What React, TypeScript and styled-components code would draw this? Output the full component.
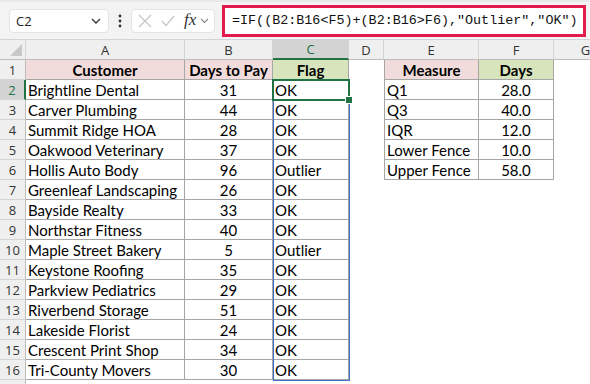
import React from "react";
import styled, { createGlobalStyle } from "styled-components";

const GlobalStyle = createGlobalStyle`
    body {
        margin: 0;
        background: #ffffff;
    }
`;

const customers: [string, number, string][] = [
    ["Brightline Dental", 31, "OK"],
    ["Carver Plumbing", 44, "OK"],
    ["Summit Ridge HOA", 28, "OK"],
    ["Oakwood Veterinary", 37, "OK"],
    ["Hollis Auto Body", 96, "Outlier"],
    ["Greenleaf Landscaping", 26, "OK"],
    ["Bayside Realty", 33, "OK"],
    ["Northstar Fitness", 40, "OK"],
    ["Maple Street Bakery", 5, "Outlier"],
    ["Keystone Roofing", 35, "OK"],
    ["Parkview Pediatrics", 29, "OK"],
    ["Riverbend Storage", 51, "OK"],
    ["Lakeside Florist", 24, "OK"],
    ["Crescent Print Shop", 34, "OK"],
    ["Tri-County Movers", 30, "OK"],
];

const measures: [string, string][] = [
    ["Q1", "28.0"],
    ["Q3", "40.0"],
    ["IQR", "12.0"],
    ["Lower Fence", "10.0"],
    ["Upper Fence", "58.0"],
];

const columns = ["A", "B", "C", "D", "E", "F", "G"];
const PINK = "#f2dcdb";
const GREEN = "#d8e4bc";

const App = () => {
    const rows = [];
    for (let r = 1; r <= 17; r++) {
        const data = r >= 2 && r <= 16 ? customers[r - 2] : null;
        const m = r >= 2 && r <= 6 ? measures[r - 2] : null;
        const inLeft = r <= 16;
        const inRight = r <= 6;
        rows.push(
            <React.Fragment key={r}>
                {/* row 17 is only a sliver at the bottom edge */}
                <RowHead $active={r === 2}>{r <= 16 ? r : ""}</RowHead>
                {r === 1 ? (
                    <>
                        <Cell $boxed $fill={PINK} $bold $align="center">Customer</Cell>
                        <Cell $boxed $fill={PINK} $bold $align="center">Days to Pay</Cell>
                        <Cell $boxed $fill={GREEN} $bold $align="center">Flag</Cell>
                        <Cell />
                        <Cell $boxed $left $fill={PINK} $bold $align="center">Measure</Cell>
                        <Cell $boxed $fill={GREEN} $bold $align="center">Days</Cell>
                        <Cell />
                    </>
                ) : (
                    <>
                        <Cell $boxed={inLeft}>{data ? data[0] : ""}</Cell>
                        <Cell $boxed={inLeft} $align="center">{data ? data[1] : ""}</Cell>
                        <Cell $boxed={inLeft}>{data ? data[2] : ""}</Cell>
                        <Cell />
                        <Cell $boxed={inRight} $left={inRight}>{m ? m[0] : ""}</Cell>
                        <Cell $boxed={inRight} $align="center">{m ? m[1] : ""}</Cell>
                        <Cell />
                    </>
                )}
            </React.Fragment>
        );
    }

    return (
        <Page>
            <GlobalStyle />
            <FormulaBar>
                <NameBox>
                    <span>C2</span>
                    <svg width="10" height="6" viewBox="0 0 10 6">
                        <polyline points="1,1 5,5 9,1" fill="none" stroke="#333" strokeWidth="1.3" />
                    </svg>
                </NameBox>
                <Dots>
                    <svg width="4" height="14" viewBox="0 0 4 14">
                        <circle cx="2" cy="2" r="1.4" fill="#333" />
                        <circle cx="2" cy="7" r="1.4" fill="#333" />
                        <circle cx="2" cy="12" r="1.4" fill="#333" />
                    </svg>
                </Dots>
                <ActionBox>
                    <svg width="14" height="14" viewBox="0 0 14 14">
                        <path d="M1 1 L13 13 M13 1 L1 13" stroke="#c6c6c6" strokeWidth="1.2" />
                    </svg>
                    <svg width="14" height="12" viewBox="0 0 14 12">
                        <polyline points="1,6 5,10.5 13,1" fill="none" stroke="#c6c6c6" strokeWidth="1.2" />
                    </svg>
                    <Fx>fx</Fx>
                    <svg width="9" height="6" viewBox="0 0 9 6">
                        <polyline points="1,1 4.5,4.5 8,1" fill="none" stroke="#888" strokeWidth="1.1" />
                    </svg>
                </ActionBox>
                <FormulaInput>=IF((B2:B16&lt;F5)+(B2:B16&gt;F6),"Outlier","OK")</FormulaInput>
            </FormulaBar>
            <Sheet>
                <Corner>
                    <svg width="12" height="12" viewBox="0 0 12 12">
                        <polygon points="12,0 12,12 0,12" fill="#c8c8c8" />
                    </svg>
                </Corner>
                {columns.map((c) => (
                    <ColHead key={c} $active={c === "C"}>
                        {c}
                    </ColHead>
                ))}
                {rows}
                <RangeBox />
                <ActiveCell>
                    <FillHandle />
                </ActiveCell>
            </Sheet>
        </Page>
    );
};

export default App;

const Page = styled.div`
    width: 590px;
    height: 384px;
    overflow: hidden;
    background: #ffffff;
    font-family: Lato, "Liberation Sans", sans-serif;
`;

const FormulaBar = styled.div`
    display: flex;
    align-items: center;
    height: 40px;
    box-sizing: border-box;
    padding-left: 9px;
    background: #f3f3f3;
    border-top: 2px solid #e9e9e9;
    border-bottom: 1px solid #d4d4d4;
`;

const NameBox = styled.div`
    display: flex;
    align-items: center;
    justify-content: space-between;
    box-sizing: border-box;
    width: 100px;
    height: 24px;
    padding: 0 7px 0 6px;
    background: #ffffff;
    border: 1px solid #e4e4e4;
    border-radius: 4px;
    font-family: "Open Sans", "Liberation Sans", sans-serif;
    font-size: 13px;
    color: #222;
`;

const Dots = styled.div`
    display: flex;
    align-items: center;
    justify-content: center;
    width: 22px;
    height: 24px;
`;

const ActionBox = styled.div`
    display: flex;
    align-items: center;
    box-sizing: border-box;
    width: 84px;
    height: 24px;
    padding: 0 4px 0 6px;
    gap: 9px;
    background: #ffffff;
    border: 1px solid #e4e4e4;
    border-radius: 4px;

    & > svg:last-child {
        margin-left: -5px;
    }
`;

const Fx = styled.span`
    font-family: "Liberation Serif", serif;
    font-style: italic;
    font-size: 17px;
    color: #333;
    line-height: 1;
    margin-bottom: 2px;
`;

const FormulaInput = styled.div`
    display: flex;
    align-items: center;
    box-sizing: border-box;
    width: 364px;
    height: 32px;
    margin-left: 7px;
    padding-left: 7px;
    background: #ffffff;
    border: 3px solid #e31b4c;
    font-family: "Liberation Mono", monospace;
    font-size: 13.4px;
    color: #111;
    white-space: nowrap;
`;

const Sheet = styled.div`
    position: relative;
    display: grid;
    grid-template-columns: 26px 159px 88px 76px 35px 95px 75px 64px;
    grid-auto-rows: 20px;
`;

const Corner = styled.div`
    display: flex;
    align-items: flex-end;
    justify-content: flex-end;
    box-sizing: border-box;
    padding: 0 3px 3px 0;
    background: #efefef;
    border-right: 1px solid #d4d4d4;
    border-bottom: 1px solid #bdbdbd;
`;

const ColHead = styled.div<{ $active?: boolean }>`
    display: flex;
    align-items: center;
    justify-content: center;
    box-sizing: border-box;
    font-family: "Open Sans", "Liberation Sans", sans-serif;
    font-size: 13px;
    color: ${(p) => (p.$active ? "#1e7145" : "#333")};
    background: ${(p) => (p.$active ? "#d3d3d3" : "#efefef")};
    border-right: 1px solid #d4d4d4;
    border-bottom: ${(p) => (p.$active ? "2px solid #217346" : "1px solid #bdbdbd")};
`;

const RowHead = styled.div<{ $active?: boolean }>`
    display: flex;
    align-items: center;
    justify-content: center;
    box-sizing: border-box;
    font-family: "Open Sans", "Liberation Sans", sans-serif;
    font-size: 13px;
    color: ${(p) => (p.$active ? "#1e7145" : "#333")};
    background: ${(p) => (p.$active ? "#d3d3d3" : "#efefef")};
    border-right: ${(p) => (p.$active ? "2px solid #217346" : "1px solid #bdbdbd")};
    border-bottom: 1px solid #d4d4d4;
`;

const Cell = styled.div<{
    $boxed?: boolean;
    $left?: boolean;
    $fill?: string;
    $bold?: boolean;
    $align?: "left" | "center";
}>`
    box-sizing: border-box;
    overflow: hidden;
    white-space: nowrap;
    padding: 1px 2px 0 2px;
    line-height: 18px;
    font-size: 15px;
    color: #000;
    font-weight: ${(p) => (p.$bold ? 700 : 400)};
    text-align: ${(p) => p.$align || "left"};
    background: ${(p) => p.$fill || "#ffffff"};
    border-right: ${(p) => (p.$boxed ? "1px solid #a6a6a6" : "none")};
    border-bottom: ${(p) => (p.$boxed ? "1px solid #a6a6a6" : "none")};
    border-left: ${(p) => (p.$left ? "1px solid #a6a6a6" : "none")};
`;

const RangeBox = styled.div`
    position: absolute;
    left: 273px;
    top: 40px;
    width: 77px;
    height: 301px;
    box-sizing: border-box;
    border: 1px solid #3f6fc6;
    pointer-events: none;
`;

const ActiveCell = styled.div`
    position: absolute;
    left: 272px;
    top: 39px;
    width: 78px;
    height: 22px;
    box-sizing: border-box;
    border: 2px solid #217346;
`;

const FillHandle = styled.div`
    position: absolute;
    right: -5px;
    bottom: -5px;
    width: 6px;
    height: 6px;
    background: #217346;
    border: 1px solid #ffffff;
`;
